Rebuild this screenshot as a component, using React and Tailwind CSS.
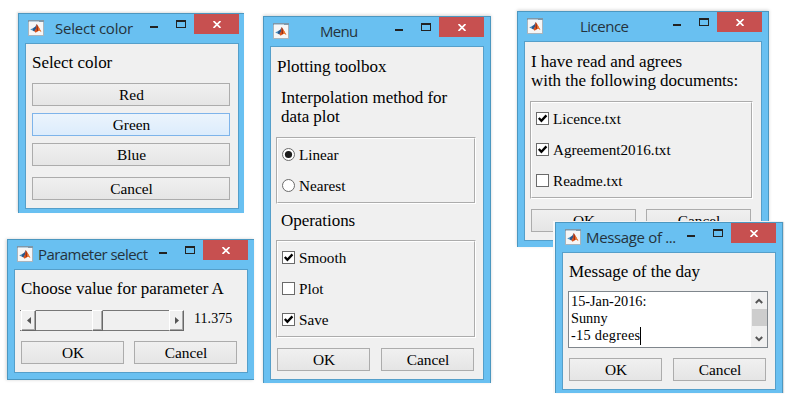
const WINDOW = 'absolute flex flex-col bg-[#69c0f1] border-[#4c97c0]';

function MatlabIcon() {
  return (
    <svg width="16" height="16" viewBox="0 0 16 16" className="mt-1.5 ml-[9px] shrink-0">
      <rect x="0.5" y="0.5" width="15" height="15" fill="#f6f6f6" stroke="#a9b4bc" />
      <rect x="0" y="0" width="16" height="2" fill="#7f97a8" />
      <rect x="1" y="1" width="10" height="1" fill="#b9cbd8" />
      <path d="M2.2 9.4L5.2 8L6.6 9.4L5 10.8Z" fill="#4a8fc0" />
      <path d="M5.2 8L7.2 6.8L8.8 4L8.6 8.6L6.4 11.4L5 10.8Z" fill="#27568c" />
      <path d="M8.8 4L10.4 6.4L13.4 12L11.4 10.6L9.4 11.4L7.6 12.8L6.4 11.2L8 8.4Z" fill="#d9541e" />
      <path d="M8.8 4L9.8 7L10 10.6L9 11.6L8.6 8Z" fill="#9a2c14" />
      <path d="M10.4 6.4L13.4 12L11.4 10.6L10.4 10.6Z" fill="#ee7c30" />
    </svg>
  );
}

function TitleBar({ title, titleClass, right }) {
  return (
    <div className={`flex h-[29px] shrink-0 items-start ${right}`}>
      <MatlabIcon />
      <div className={`flex-1 whitespace-nowrap pt-[3px] font-['Open_Sans',sans-serif] text-[15px] leading-[22px] text-[#25333d] ${titleClass}`}>
        {title}
      </div>
      <div className="mt-3 mr-[18px] h-0.5 w-2 shrink-0 bg-[#222]" />
      <div className="mt-1.5 mr-2 h-2 w-2.5 shrink-0 border border-t-2 border-[#222]" />
      <div className="flex h-5 w-[45px] shrink-0 items-center justify-center bg-[#c75050]">
        <svg width="8" height="7" viewBox="0 0 8 7" className="mt-px ml-px">
          <path d="M0.5 0.1L7.5 6.9M7.5 0.1L0.5 6.9" stroke="#fff" strokeWidth="1.8" />
        </svg>
      </div>
    </div>
  );
}

function Client({ className, children }) {
  return (
    <div className={`ml-1.5 flex flex-col border border-[#559fca] bg-[#f0f0f0] font-['Liberation_Serif',serif] text-black ${className}`}>
      {children}
    </div>
  );
}

function Caption({ className = '', children }) {
  return <div className={`whitespace-nowrap text-[17px] leading-[19px] tracking-[-0.04px] ${className}`}>{children}</div>;
}

function Button({ className = '', active, children }) {
  const look = active
    ? 'border-[#7eb4ea] from-[#ebf4fc] to-[#dcecfc]'
    : 'border-[#acacac] from-[#f0f0f0] to-[#e5e5e5]';
  return (
    <div className={`flex h-[23px] shrink-0 items-center justify-center border bg-linear-to-b pl-px text-[15.4px] leading-[21px] ${look} ${className}`}>
      {children}
    </div>
  );
}

function Panel({ className, children }) {
  return (
    <div className={`shrink-0 border border-t-[#acacac] border-l-[#acacac] border-r-white border-b-white ${className}`}>
      <div className="flex h-full flex-col gap-[18px] border border-t-white border-l-white border-r-[#acacac] border-b-[#acacac] pt-[9px] pl-1">
        {children}
      </div>
    </div>
  );
}

function Option({ checked, radio, children }) {
  return (
    <div className="flex h-[13px] items-center">
      <svg width="13" height="13" viewBox="0 0 13 13" className="shrink-0">
        {radio ? (
          <>
            <circle cx="6.5" cy="6.5" r="6" fill="#fff" stroke="#6a6a6a" />
            {checked && <circle cx="6.5" cy="6.5" r="3.6" fill="#1c1c1c" />}
          </>
        ) : (
          <>
            <rect x="0.5" y="0.5" width="12" height="12" fill="#fff" stroke="#6a6a6a" />
            {checked && <path d="M2.8 6L5.4 8.8L10.4 3.4" fill="none" stroke="#000" strokeWidth="2.3" />}
          </>
        )}
      </svg>
      <span className="ml-1 whitespace-nowrap text-[15.2px] leading-[17px]">{children}</span>
    </div>
  );
}

function SliderBlock({ w, arrow }) {
  return (
    <div className={`flex h-[21px] shrink-0 items-center justify-center border border-t-white border-l-white border-r-[#696969] border-b-[#696969] bg-[#f0f0f0] shadow-[inset_-1px_-1px_0_#a8a8a8] ${w}`}>
      {arrow && (
        <svg width="4" height="7" viewBox="0 0 4 7">
          <path d={arrow} fill="#555" />
        </svg>
      )}
    </div>
  );
}

export default function App() {
  return (
    <div className="relative h-[400px] w-[800px] overflow-hidden bg-white">
      <div className={`${WINDOW} left-[18px] top-[13px] h-[200px] w-[226px] border-t border-l shadow-[-1px_-1px_2px_#ddd]`}>
        <TitleBar title="Select color" titleClass="ml-[11px] tracking-[-0.2px]" right="mr-[5px]" />
        <Client className="mr-[5px] h-[166px] px-1.5 pt-[9px]">
          <Caption>Select color</Caption>
          <Button className="mt-[11px] w-[198px]">Red</Button>
          <Button active className="mt-[7px] w-[198px]">Green</Button>
          <Button className="mt-[7px] w-[198px]">Blue</Button>
          <Button className="mt-[11px] w-[198px]">Cancel</Button>
        </Client>
      </div>

      <div className={`${WINDOW} left-[263px] top-[16px] h-[367px] w-[228px] border-t border-x shadow-[0_-1px_3px_#d5d5d5]`}>
        <TitleBar title="Menu" titleClass="ml-[31px] tracking-[-0.7px]" right="mr-1.5" />
        <Client className="mr-1.5 h-[334px] pt-2.5 pl-[5px]">
          <Caption className="pl-px">Plotting toolbox</Caption>
          <Caption className="mt-3 pl-[5px]">Interpolation method for<br />data plot</Caption>
          <Panel className="mt-[11px] h-[67px] w-[200px]">
            <Option radio checked>Linear</Option>
            <Option radio>Nearest</Option>
          </Panel>
          <Caption className="mt-[7px] pl-[5px]">Operations</Caption>
          <Panel className="mt-2.5 h-[98px] w-[200px]">
            <Option checked>Smooth</Option>
            <Option>Plot</Option>
            <Option checked>Save</Option>
          </Panel>
          <div className="mt-2.5 ml-px flex gap-[11px]">
            <Button className="w-[93px]">OK</Button>
            <Button className="w-[93px]">Cancel</Button>
          </div>
        </Client>
      </div>

      <div className={`${WINDOW} left-[7px] top-[239px] h-[141px] w-[247px] border-y border-l shadow-[-1px_0_3px_#d5d5d5]`}>
        <TitleBar title="Parameter select" titleClass="ml-[5px] tracking-[-0.55px]" right="mr-1.5" />
        <Client className="mr-1.5 h-[104px] pt-[9px] pl-[5px]">
          <Caption className="pl-px">Choose value for parameter A</Caption>
          <div className="mt-3 flex items-center">
            <div className="flex h-[21px] w-[164px] border-y border-y-[#777] pl-px">
              <div className="-mt-px flex">
                <SliderBlock w="w-[15px]" arrow="M4 0V7L0 3.5Z" />
                <div className="w-14" />
                <SliderBlock w="w-[11px]" />
                <div className="w-[66px]" />
                <SliderBlock w="w-[15px]" arrow="M0 0V7L4 3.5Z" />
              </div>
            </div>
            <span className="-mt-1 ml-[10px] text-[14px] leading-[17px] tracking-[0.05px]">11.375</span>
          </div>
          <div className="mt-2.5 ml-px flex gap-2.5">
            <Button className="w-[103px]">OK</Button>
            <Button className="w-[103px]">Cancel</Button>
          </div>
        </Client>
      </div>

      <div className={`${WINDOW} left-[517px] top-[11px] h-[236px] w-[252px] border-t border-x shadow-[0_-1px_3px_#d5d5d5]`}>
        <TitleBar title="Licence" titleClass="ml-[37px] tracking-[-0.5px]" right="mr-1.5" />
        <Client className="mr-1.5 h-[200px] pt-2.5 pl-[5px]">
          <Caption className="pl-px">I have read and agrees<br />with the following documents:</Caption>
          <Panel className="mt-[11px] h-[98px] w-[223px]">
            <Option checked>Licence.txt</Option>
            <Option checked>Agreement2016.txt</Option>
            <Option>Readme.txt</Option>
          </Panel>
          <div className="mt-2.5 ml-px flex gap-2.5">
            <Button className="w-[105px]">OK</Button>
            <Button className="w-[105px]">Cancel</Button>
          </div>
        </Client>
      </div>

      <div className={`${WINDOW} left-[555px] top-[222px] h-[171px] w-[228px] border-t border-x shadow-[0_-1px_0_#f2f2f2,-2px_0_0_#f8f8f8,-2px_-1px_0_#f8f8f8,1px_0_1px_#ddd]`}>
        <TitleBar title="Message of ..." titleClass="ml-[5px] tracking-[-0.35px]" right="mr-1.5" />
        <Client className="mr-1.5 h-[138px] pt-[9px] pl-[5px]">
          <Caption className="pl-px">Message of the day</Caption>
          <div className="mt-2.5 flex h-[57px] w-[200px] border border-[#7f868c] bg-white">
            <div className="flex-1 pt-px pl-0.5 text-[14.3px] leading-[17px]">
              <div>15-Jan-2016:</div>
              <div>Sunny</div>
              <div className="flex"><span className="tracking-[0.28px]">-15 degrees</span><span className="h-[18px] w-px bg-black" /></div>
            </div>
            <div className="flex w-4 flex-col items-center bg-[#f0f0f0]">
              <svg width="8" height="6" viewBox="0 0 8 6" className="mt-1.5">
                <path d="M0.8 5L4 1.8L7.2 5" fill="none" stroke="#555" strokeWidth="2" />
              </svg>
              <div className="mt-[5px] h-[17px] w-[15px] bg-[#cdcdcd]" />
              <svg width="8" height="6" viewBox="0 0 8 6" className="mt-[10px]">
                <path d="M0.8 1L4 4.2L7.2 1" fill="none" stroke="#555" strokeWidth="2" />
              </svg>
            </div>
          </div>
          <div className="mt-2.5 ml-px flex gap-[11px]">
            <Button className="w-[93px]">OK</Button>
            <Button className="w-[93px]">Cancel</Button>
          </div>
        </Client>
      </div>
    </div>
  );
}
